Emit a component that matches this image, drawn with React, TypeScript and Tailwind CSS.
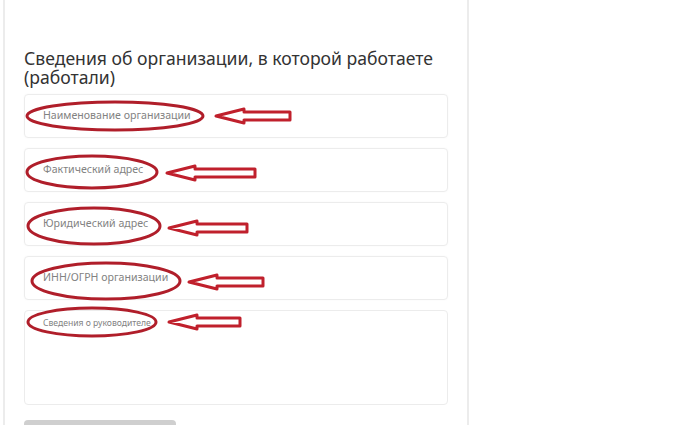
const fields = [
  { label: 'Наименование организации' },
  { label: 'Фактический адрес' },
  { label: 'Юридический адрес' },
  { label: 'ИНН/ОГРН организации' },
];

const marks = [
  { cx: 115, cy: 116, rx: 88, ry: 14, ax: 216, ay: 116, len: 74 },
  { cx: 92, cy: 172, rx: 65, ry: 16, ax: 167, ay: 173, len: 88 },
  { cx: 94, cy: 226, rx: 66, ry: 18, ax: 169, ay: 228, len: 78 },
  { cx: 106, cy: 281, rx: 74, ry: 18, ax: 189, ay: 282, len: 74 },
  { cx: 92, cy: 322, rx: 64, ry: 14, ax: 169, ay: 322, len: 71 },
];

function Arrow({ x, y, len }: { x: number; y: number; len: number }) {
  const head = 28;
  const d = `M${x} ${y} L${x + head} ${y - 7} L${x + head} ${y - 4} L${x + len} ${y - 4} L${x + len} ${y + 4} L${x + head} ${y + 4} L${x + head} ${y + 7} Z`;
  return <path d={d} fill="white" stroke="#c0202c" strokeWidth="3" strokeLinejoin="round" />;
}

function App() {
  return (
    <div className="relative h-[425px] w-[700px] overflow-hidden bg-white" style={{ fontFamily: '"Noto Sans", "Open Sans", sans-serif' }}>
      <div className="ml-[3px] h-full w-[466px] border-x-2 border-[#ececec] px-[19px] pt-[49px]">
        <h2 className="text-[17.6px] leading-[19px] text-[#333]">Сведения об организации, в которой работаете (работали)</h2>
        <div className="mt-[7px] flex flex-col gap-[10px]">
          {fields.map(({ label }) => (
            <div key={label} className="flex h-[44px] items-center rounded-sm border border-[#ececec] px-[18px] text-[10.6px] text-[#828282] shadow-[0_0_2px_rgba(0,0,0,0.04)]">
              {label}
            </div>
          ))}
          <div className="h-[95px] rounded-sm border border-[#ececec] px-[18px] pt-[6px] text-[8.6px] text-[#828282]">
            Сведения о руководителе
          </div>
        </div>
        <div className="mt-[15px] h-[10px] w-[152px] rounded-t-sm bg-[#cfcfcf]" />
      </div>

      <svg className="pointer-events-none absolute inset-0" width="700" height="425" viewBox="0 0 700 425">
        {marks.map((m, i) => (
          <g key={i}>
            <ellipse cx={m.cx} cy={m.cy} rx={m.rx} ry={m.ry} fill="none" stroke="#b01e2a" strokeWidth="3" />
            <Arrow x={m.ax} y={m.ay} len={m.len} />
          </g>
        ))}
      </svg>
    </div>
  );
}

export default App;
